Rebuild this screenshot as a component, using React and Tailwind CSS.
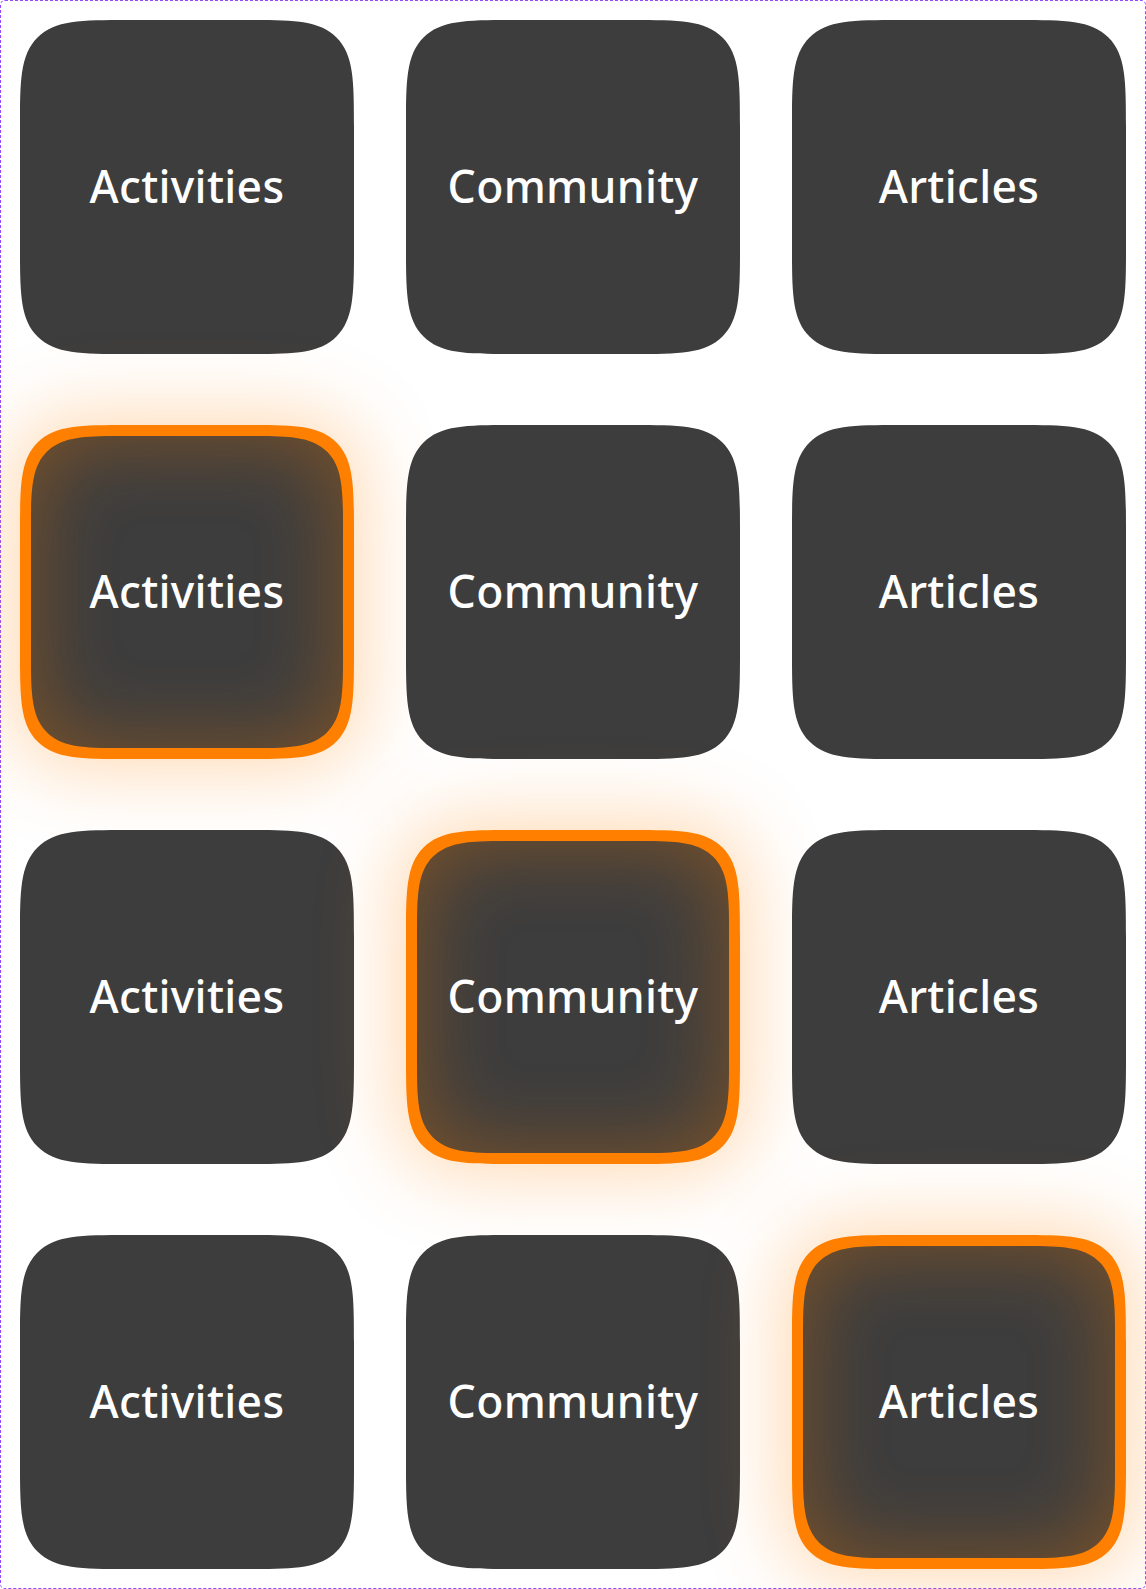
import React from "react";

const labels = ["Activities", "Community", "Articles"];

function Card({ label, active }) {
  const base =
    "relative flex h-[334px] items-center justify-center rounded-[66px] bg-[#3d3d3d] supports-[corner-shape:squircle]:rounded-[110px] supports-[corner-shape:squircle]:[corner-shape:squircle]";
  const activeCls =
    "border-[11px] border-[#ff8000] shadow-[0_0_80px_10px_rgba(255,128,0,0.3),inset_0_0_80px_6px_rgba(255,128,0,0.3)]";
  return (
    <div className={active ? base + " " + activeCls : base}>
      <span className="-mt-[2px] text-[44.5px] font-medium leading-none tracking-[0.3px] text-white [font-family:'Noto_Sans','Open_Sans',sans-serif]">
        {label}
      </span>
    </div>
  );
}

export default function App() {
  const rows = [0, 1, 2, 3];
  return (
    <div className="h-[1589px] w-[1146px] bg-white">
      <div className="grid h-full w-full grid-cols-3 gap-x-[52px] gap-y-[71px] rounded-[5px] border border-dashed border-[#9747ff] px-[19px] py-[19px]">
        {rows.map((r) =>
          labels.map((l, c) => (
            <Card key={r + "-" + c} label={l} active={r > 0 && c === r - 1} />
          ))
        )}
      </div>
    </div>
  );
}
